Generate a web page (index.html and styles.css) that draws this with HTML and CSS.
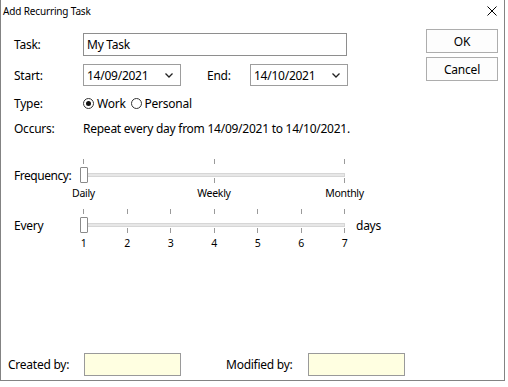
FILE: index.html
```html
<!DOCTYPE html>
<html lang="en">
<head>
    <meta charset="UTF-8">
    <title>Add Recurring Task</title>
    <link rel="stylesheet" href="styles.css">
</head>
<body>
    <div class="window">
        <header class="titlebar">
            <span class="title">Add Recurring Task</span>
            <svg class="close" width="10" height="10" viewBox="0 0 10 10">
                <path d="M0.5 0.5 L9.5 9.5 M9.5 0.5 L0.5 9.5" stroke="#000" stroke-width="1" fill="none"/>
            </svg>
        </header>

        <div class="content">
            <main class="form">
                <div class="row row-task">
                    <label class="label">Task:</label>
                    <div class="textbox task-box">My Task</div>
                </div>

                <div class="row row-dates">
                    <label class="label">Start:</label>
                    <div class="combo">
                        <span>14/09/2021</span>
                        <svg width="8" height="5" viewBox="0 0 8 5"><path d="M0.5 0.5 L4 4 L7.5 0.5" stroke="#222" stroke-width="1.3" fill="none"/></svg>
                    </div>
                    <label class="label-end">End:</label>
                    <div class="combo">
                        <span>14/10/2021</span>
                        <svg width="8" height="5" viewBox="0 0 8 5"><path d="M0.5 0.5 L4 4 L7.5 0.5" stroke="#222" stroke-width="1.3" fill="none"/></svg>
                    </div>
                </div>

                <div class="row row-type">
                    <label class="label">Type:</label>
                    <span class="radio checked"></span><span class="radio-text">Work</span>
                    <span class="radio"></span><span class="radio-text">Personal</span>
                </div>

                <div class="row row-occurs">
                    <label class="label">Occurs:</label>
                    <span>Repeat every day from 14/09/2021 to 14/10/2021.</span>
                </div>

                <div class="slider-block freq">
                    <div class="ticks">
                        <i></i><i></i><i></i>
                    </div>
                    <div class="slider-line">
                        <label class="label narrow">Frequency:</label>
                        <div class="track-area">
                            <div class="track"></div>
                            <div class="ticks bottom">
                                <i></i><i></i><i></i>
                            </div>
                            <div class="thumb"></div>
                        </div>
                    </div>
                    <div class="scale">
                        <span>Daily</span><span>Weekly</span><span>Monthly</span>
                    </div>
                </div>

                <div class="slider-block every">
                    <div class="ticks">
                        <i></i><i></i><i></i><i></i><i></i><i></i><i></i>
                    </div>
                    <div class="slider-line">
                        <label class="label">Every</label>
                        <div class="track-area">
                            <div class="track"></div>
                            <div class="ticks bottom">
                                <i></i><i></i><i></i><i></i><i></i><i></i><i></i>
                            </div>
                            <div class="thumb"></div>
                        </div>
                        <span class="unit">days</span>
                    </div>
                    <div class="scale">
                        <span>1</span><span>2</span><span>3</span><span>4</span><span>5</span><span>6</span><span>7</span>
                    </div>
                </div>
            </main>

            <aside class="actions">
                <button class="btn">OK</button>
                <button class="btn">Cancel</button>
            </aside>
        </div>

        <footer class="footer">
            <label class="foot-label">Created by:</label>
            <div class="textbox note"></div>
            <label class="foot-label modified">Modified by:</label>
            <div class="textbox note"></div>
        </footer>
    </div>
</body>
</html>
```

FILE: styles.css
```css
* {
    margin: 0;
    padding: 0;
    box-sizing: border-box;
}

body {
    background: #fff;
    font-family: 'Noto Sans', sans-serif;
    font-size: 12px;
    letter-spacing: -0.25px;
    color: #000;
}

.window {
    width: 505px;
    height: 381px;
    border: 1px solid #838383;
    border-top: none;
    display: flex;
    flex-direction: column;
    background: #fff;
}

.titlebar {
    height: 21px;
    display: flex;
    align-items: center;
    justify-content: space-between;
    padding: 0 7px 0 2px;
}

.title {
    font-size: 10px;
    letter-spacing: -0.15px;
    line-height: 20px;
}

.close {
    display: block;
}

.content {
    flex: 1;
    display: flex;
    justify-content: space-between;
}

.form {
    padding: 12px 0 0 13px;
}

.row {
    display: flex;
    align-items: center;
}

.label {
    width: 69px;
    flex-shrink: 0;
}

.label.narrow {
    letter-spacing: -0.45px;
}

.row-task {
    height: 23px;
}

.textbox {
    border: 1px solid #8e8e8e;
    height: 23px;
    padding: 0 3px;
    line-height: 21px;
    background: #fff;
}

.task-box {
    width: 264px;
}

.row-dates {
    margin-top: 8px;
    height: 22px;
}

.combo {
    width: 98px;
    height: 22px;
    border: 1px solid #9d9d9d;
    display: flex;
    align-items: center;
    justify-content: space-between;
    padding: 0 7px 0 3px;
}

.label-end {
    width: 69px;
    padding-left: 26px;
}

.row-type {
    margin-top: 8px;
    height: 18px;
}

.radio {
    width: 11px;
    height: 11px;
    border: 1px solid #333;
    border-radius: 50%;
    display: flex;
    align-items: center;
    justify-content: center;
}

.radio.checked::after {
    content: '';
    width: 5px;
    height: 5px;
    border-radius: 50%;
    background: #111;
}

.radio-text {
    margin: 0 5px 0 3px;
}

.row-occurs {
    margin-top: 7px;
    height: 18px;
}

/* trackbars */
.slider-block {
    width: 380px;
}

.freq {
    margin-top: 22px;
}

.every {
    margin-top: 9px;
}

.ticks {
    display: flex;
    justify-content: space-between;
    width: 262px;
    margin-left: 69px;
    height: 5px;
}

.ticks i {
    width: 1px;
    height: 5px;
    background: #9a9a9a;
}

.slider-line {
    display: flex;
    align-items: center;
    margin-top: 3px;
    height: 16px;
}

.track-area {
    position: relative;
    width: 262px;
    height: 16px;
    padding-top: 6px;
}

.track {
    height: 4px;
    background: #e7e7e7;
    border: 1px solid #d6d6d6;
}

.ticks.bottom {
    margin: 1px 0 0 0;
    height: 5px;
}

.thumb {
    position: absolute;
    left: -3px;
    top: 0;
    width: 8px;
    height: 16px;
    border: 1px solid #8a8a8a;
    border-radius: 1px;
    background: #fff;
}

.unit {
    margin-left: 11px;
}

.scale {
    display: flex;
    justify-content: space-between;
    width: 262px;
    margin-left: 69px;
    margin-top: 3px;
    height: 14px;
}

.scale span {
    width: 1px;
    display: flex;
    justify-content: center;
    white-space: nowrap;
    font-size: 10.5px;
    letter-spacing: -0.3px;
    line-height: 14px;
}

.every .scale {
    margin-top: 3px;
}

.actions {
    display: flex;
    flex-direction: column;
    gap: 4px;
    padding: 8px 6px 0 0;
}

.btn {
    width: 72px;
    height: 24px;
    border: 1px solid #adadad;
    background: #fdfdfd;
    font-family: inherit;
    font-size: 12px;
    letter-spacing: -0.2px;
    color: #000;
}

.footer {
    display: flex;
    align-items: center;
    padding: 0 0 4px 7px;
}

.foot-label {
    width: 76px;
}

.note {
    width: 97px;
    background: #ffffe1;
    border-color: #9a9a9a;
}

.modified {
    width: 82px;
    margin-left: 45px;
}
```
